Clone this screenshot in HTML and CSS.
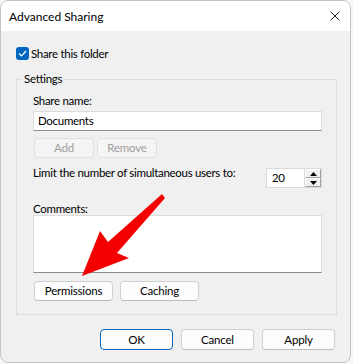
FILE: index.html
```html
<!DOCTYPE html>
<html lang="en">
<head>
<meta charset="UTF-8">
<meta name="viewport" content="width=device-width, initial-scale=1.0">
<title>Advanced Sharing</title>
<link rel="stylesheet" href="styles.css">
</head>
<body>
  <div class="window">
    <div class="titlebar">
      <span class="title">Advanced Sharing</span>
      <span class="close">
        <svg width="10" height="10" viewBox="0 0 10 10"><path d="M0.5 0.5L9.5 9.5M9.5 0.5L0.5 9.5" stroke="#1a1a1a" stroke-width="1"/></svg>
      </span>
    </div>
    <div class="content">
      <label class="check-row">
        <span class="checkbox">
          <svg width="9" height="7" viewBox="0 0 9 7"><path d="M1 3.5L3.5 6L8 1" fill="none" stroke="#fff" stroke-width="1.2"/></svg>
        </span>
        Share this folder
      </label>

      <fieldset class="settings">
        <legend>Settings</legend>
        <div class="group-body">
          <div class="label">Share name:</div>
          <div class="textbox">Documents</div>
          <div class="button-row">
            <button class="btn small" disabled>Add</button>
            <button class="btn small" disabled>Remove</button>
          </div>
          <div class="limit-row">
            <span class="limit-text">Limit the number of simultaneous users to:</span>
            <div class="spinner">
              <span class="spin-value">20</span>
              <span class="spin-buttons">
                <span class="spin-btn"><svg width="7" height="4" viewBox="0 0 7 4"><path d="M0 4L3.5 0L7 4Z" fill="#000"/></svg></span>
                <span class="spin-btn"><svg width="7" height="4" viewBox="0 0 7 4"><path d="M0 0L3.5 4L7 0Z" fill="#000"/></svg></span>
              </span>
            </div>
          </div>
          <div class="label comments-label">Comments:</div>
          <div class="textarea"></div>
          <div class="button-row lower">
            <button class="btn wide">Permissions</button>
            <button class="btn wide">Caching</button>
          </div>
        </div>
      </fieldset>

      <div class="footer">
        <button class="btn dialog default">OK</button>
        <button class="btn dialog">Cancel</button>
        <button class="btn dialog">Apply</button>
      </div>
    </div>

    <!-- red arrow over the dialog -->
    <svg class="arrow" width="353" height="364" viewBox="0 0 353 364">
      <polygon points="162,194 165,198 117,253 129,258 82,276 100,231 108,242" fill="#f40000"/>
    </svg>
  </div>
</body>
</html>
```

FILE: styles.css
```css
body {
  margin: 0;
  padding: 0;
  background-color: #f7f7f7;
  font-family: Lato, "Liberation Sans", sans-serif;
  font-size: 11.5px;
  letter-spacing: -0.3px;
  color: #000;
}
.window {
  position: relative;
  width: 349px;
  height: 361px;
  border: 1px solid #c4c4c4;
  border-radius: 8px;
  background-color: #f0f0f0;
  overflow: hidden;
}
.titlebar {
  display: flex;
  align-items: center;
  justify-content: space-between;
  height: 30px;
  background-color: #fff;
  padding: 0 9px 0 8px;
}
.title {
  font-size: 12px;
  letter-spacing: 0;
  color: #000;
}
.close {
  display: flex;
  width: 10px;
  height: 10px;
  margin-right: 1px;
}
.content {
  padding: 16px 14px 0 15px;
}
.check-row {
  display: flex;
  align-items: center;
  gap: 2px;
  height: 13px;
  line-height: 13px;
}
.checkbox {
  display: flex;
  align-items: center;
  justify-content: center;
  width: 13px;
  height: 13px;
  background-color: #0067c0;
  border-radius: 3px;
}
.settings {
  margin: 11px 0 0 0;
  padding: 0;
  border: 1px solid #dcdcdc;
  width: 319px;
}
.settings legend {
  padding: 0 2px;
  margin-left: 5px;
  line-height: 16px;
}
.group-body {
  padding: 0 14px 13px 16px;
}
.label {
  line-height: 16px;
  margin-top: 6px;
}
.textbox {
  margin-top: 2px;
  height: 18px;
  line-height: 18px;
  padding: 0 4px;
  background-color: #fff;
  border: 1px solid #dcdcdc;
  border-bottom-color: #8c8c8c;
}
.button-row {
  display: flex;
  gap: 3px;
  margin-top: 7px;
  padding-left: 1px;
}
.button-row.lower {
  gap: 7px;
  margin-top: 8px;
}
.btn {
  font-family: inherit;
  font-size: 11.5px;
  letter-spacing: -0.2px;
  color: #000;
  background-color: #fdfdfd;
  border: 1px solid #d0d0d0;
  border-bottom-color: #bcbcbc;
  border-radius: 4px;
  padding: 0;
  height: 20px;
  line-height: 18px;
}
.btn.small {
  width: 60px;
}
.btn.small:disabled {
  background-color: #f5f5f5;
  border-color: #e0e0e0;
  color: #9d9d9d;
}
.btn.wide {
  width: 79px;
}
.limit-row {
  display: flex;
  align-items: flex-start;
  justify-content: space-between;
  white-space: nowrap;
  margin-top: 7px;
}
.limit-text {
  line-height: 16px;
}
.spinner {
  display: flex;
  margin-top: 3px;
  width: 54px;
  height: 18px;
  background-color: #fff;
  border: 1px solid #dadada;
}
.spin-value {
  flex: 1;
  line-height: 18px;
  padding-left: 5px;
}
.spin-buttons {
  display: flex;
  flex-direction: column;
  width: 16px;
  border-left: 1px solid #dadada;
}
.spin-btn {
  flex: 1;
  display: flex;
  align-items: center;
  justify-content: center;
  background-color: #f0f0f0;
  border: 1px solid #fff;
  border-right-color: #a0a0a0;
  border-bottom-color: #a0a0a0;
}
.comments-label {
  margin-top: 13px;
}
.textarea {
  margin-top: -2px;
  height: 56px;
  background-color: #fff;
  border: 1px solid #dcdcdc;
  border-bottom-color: #8c8c8c;
}
.footer {
  display: flex;
  justify-content: flex-end;
  gap: 8px;
  margin-top: 14px;
  padding-right: 1px;
}
.btn.dialog {
  width: 73px;
  height: 21px;
}
.btn.default {
  border-color: #0067c0;
}
.arrow {
  position: absolute;
  left: -1px;
  top: -1px;
  pointer-events: none;
}
```
